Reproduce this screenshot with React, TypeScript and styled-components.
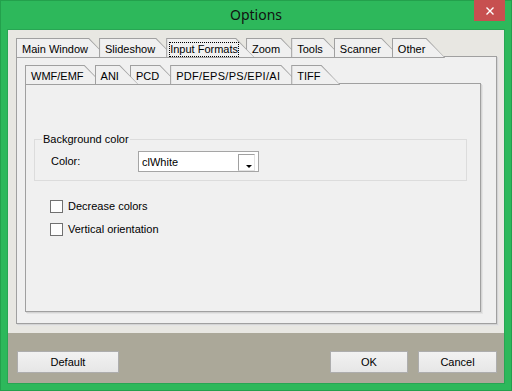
import React from 'react';
import styled, { createGlobalStyle, css } from 'styled-components';

const GlobalStyle = createGlobalStyle`
  html, body {
    margin: 0;
    padding: 0;
    width: 512px;
    height: 391px;
    overflow: hidden;
    background: #2db85b;
  }
  * {
    box-sizing: border-box;
  }
`;

const UI_FONT = `'Liberation Sans', Arial, sans-serif`;

const Window = styled.div`
  width: 512px;
  height: 391px;
  display: flex;
  flex-direction: column;
  background: #2db85b;
  box-shadow: inset 0 0 0 1px #23a04c;
  padding: 0 8px 8px;
  font-family: ${UI_FONT};
  font-size: 11px;
  color: #000;
`;

const TitleBar = styled.div`
  height: 30px;
  margin: 0 -8px;
  display: grid;
  grid-template-columns: 1fr auto 1fr;
  align-items: start;
`;

const Title = styled.div`
  grid-column: 2;
  padding-top: 6px;
  font-family: 'Noto Sans', 'Open Sans', sans-serif;
  font-size: 14px;
  line-height: 18px;
  color: #111;
`;

const CloseButton = styled.div`
  grid-column: 3;
  justify-self: end;
  margin-right: 7px;
  width: 31px;
  height: 21px;
  background: #c75050;
  display: flex;
  align-items: center;
  justify-content: center;
`;

const Client = styled.div`
  flex: 1;
  display: flex;
  flex-direction: column;
  background: #e8e7e2;
  box-shadow: 0 0 0 1px #27a653;
`;

const MainArea = styled.div`
  height: 303px;
  padding: 8px 0 0 8px;
`;

const PageControl = styled.div<{ $width: number }>`
  width: ${({ $width }) => $width}px;
  display: flex;
  flex-direction: column;
`;

const TabRow = styled.div`
  display: flex;
  height: 19px;
  position: relative;
  z-index: 1;
  margin-bottom: -1px;
`;

const TAB_SHAPE = 'polygon(0 0, calc(100% - 19px) 0, 100% 100%, 0 100%)';
const TAB_FACE = 'polygon(0 0, calc(100% - 19.4px) 0, calc(100% - 1.4px) 100%, 0 100%)';

const Tab = styled.div<{ $index: number; $active?: boolean }>`
  position: relative;
  height: 20px;
  padding: 2px 20px 0 6px;
  margin-left: ${({ $index }) => ($index === 0 ? 0 : -9)}px;
  z-index: ${({ $index, $active }) => ($active ? 50 : $index + 1)};
  background: #a0a0a0;
  clip-path: ${TAB_SHAPE};
  display: flex;
  align-items: center;
  white-space: nowrap;
  line-height: 13px;

  &::before {
    content: '';
    position: absolute;
    top: 1px;
    left: 1px;
    right: 0;
    bottom: 1px;
    background: #f0f0f0;
    clip-path: ${TAB_FACE};
  }
`;

const TabLabel = styled.span<{ $focused?: boolean; $wide?: boolean }>`
  position: relative;
  letter-spacing: ${({ $wide }) => ($wide ? '0.3px' : 'normal')};
  ${({ $focused }) =>
    $focused &&
    css`
      outline: 1px dotted #000;
      outline-offset: 0px;
      margin-left: -2px;
      margin-right: -3px;
    `}
`;

const Sheet = styled.div<{ $height: number }>`
  height: ${({ $height }) => $height}px;
  background: #f0f0f0;
  border: 1px solid #a0a0a0;
  box-shadow: 1px 1px 0 #d4d4d4, 2px 2px 0 #e4e4e4;
  position: relative;
`;

const OuterSheetBody = styled.div`
  padding: 8px 0 0 8px;
`;

const InnerSheetBody = styled.div`
  padding: 55px 0 0 8px;
  display: flex;
  flex-direction: column;
`;

const GroupBox = styled.div`
  position: relative;
  width: 433px;
  height: 42px;
  border: 1px solid #dcdcdc;
  display: flex;
  align-items: flex-start;
  padding: 11px 0 0 16px;
`;

const GroupCaption = styled.span`
  position: absolute;
  top: -7px;
  left: 7px;
  padding: 0 1px;
  line-height: 13px;
  background: #f0f0f0;
`;

const FieldLabel = styled.span`
  width: 87px;
  line-height: 20px;
`;

const Combo = styled.div`
  width: 121px;
  height: 21px;
  border: 1px solid #a5a5a5;
  background: #fff;
  display: flex;
  align-items: center;
  justify-content: space-between;
  padding: 0 3px 0 3px;
`;

const ColorSwatch = styled.div`
  width: 17px;
  height: 17px;
  border-top: 1px solid #a0a0a0;
  border-left: 1px solid #a0a0a0;
  border-right: 1px solid #e3e3e3;
  border-bottom: 1px solid #e3e3e3;
  background: #fff;
  position: relative;
  margin-top: 1px;

  &::after {
    content: '';
    position: absolute;
    right: 2px;
    bottom: 2px;
    border-left: 3px solid transparent;
    border-right: 3px solid transparent;
    border-top: 3px solid #000;
  }
`;

const CheckList = styled.div`
  display: flex;
  flex-direction: column;
  gap: 10px;
  margin: 19px 0 0 16px;
`;

const CheckRow = styled.label`
  display: flex;
  align-items: center;
  gap: 5px;
  height: 13px;
  line-height: 13px;
`;

const CheckBox = styled.span`
  width: 13px;
  height: 13px;
  border: 1px solid #707070;
  background: #fdfdfd;
`;

const BottomPanel = styled.div`
  height: 50px;
  background: #aba899;
  display: flex;
  align-items: flex-start;
  padding: 18px 7px 0 9px;
  gap: 10px;
`;

const Button = styled.div<{ $width: number }>`
  width: ${({ $width }) => $width}px;
  height: 22px;
  border: 1px solid #adadad;
  background: linear-gradient(#f2f2f2, #e6e6e6);
  display: flex;
  align-items: center;
  justify-content: center;
  line-height: 13px;
`;

const Spacer = styled.div`
  flex: 1;
`;

const outerTabs = ['Main Window', 'Slideshow', 'Input Formats', 'Zoom', 'Tools', 'Scanner', 'Other'];
const innerTabs = ['WMF/EMF', 'ANI', 'PCD', 'PDF/EPS/PS/EPI/AI', 'TIFF'];

const App: React.FC = () => {
  return (
    <>
      <GlobalStyle />
      <Window>
        <TitleBar>
          <Title>Options</Title>
          <CloseButton>
            <svg width="10" height="10" viewBox="0 0 10 10">
              <path d="M1.5 1.5 L8.5 8.5 M8.5 1.5 L1.5 8.5" stroke="#fff" strokeWidth="1.4" />
            </svg>
          </CloseButton>
        </TitleBar>
        <Client>
          <MainArea>
            <PageControl $width={481}>
              <TabRow>
                {outerTabs.map((t, i) => (
                  <Tab key={t} $index={i} $active={t === 'Input Formats'}>
                    <TabLabel $focused={t === 'Input Formats'}>{t}</TabLabel>
                  </Tab>
                ))}
              </TabRow>
              <Sheet $height={268}>
                <OuterSheetBody>
                  <PageControl $width={456}>
                    <TabRow>
                      {innerTabs.map((t, i) => (
                        <Tab key={t} $index={i} $active={t === 'ANI'}>
                          <TabLabel $wide={t.length > 10}>{t}</TabLabel>
                        </Tab>
                      ))}
                    </TabRow>
                    <Sheet $height={229}>
                      <InnerSheetBody>
                        <GroupBox>
                          <GroupCaption>Background color</GroupCaption>
                          <FieldLabel>Color:</FieldLabel>
                          <Combo>
                            <span>clWhite</span>
                            <ColorSwatch />
                          </Combo>
                        </GroupBox>
                        <CheckList>
                          <CheckRow>
                            <CheckBox />
                            Decrease colors
                          </CheckRow>
                          <CheckRow>
                            <CheckBox />
                            Vertical orientation
                          </CheckRow>
                        </CheckList>
                      </InnerSheetBody>
                    </Sheet>
                  </PageControl>
                </OuterSheetBody>
              </Sheet>
            </PageControl>
          </MainArea>
          <BottomPanel>
            <Button $width={102}>Default</Button>
            <Spacer />
            <Button $width={78}>OK</Button>
            <Button $width={79}>Cancel</Button>
          </BottomPanel>
        </Client>
      </Window>
    </>
  );
};

export default App;
